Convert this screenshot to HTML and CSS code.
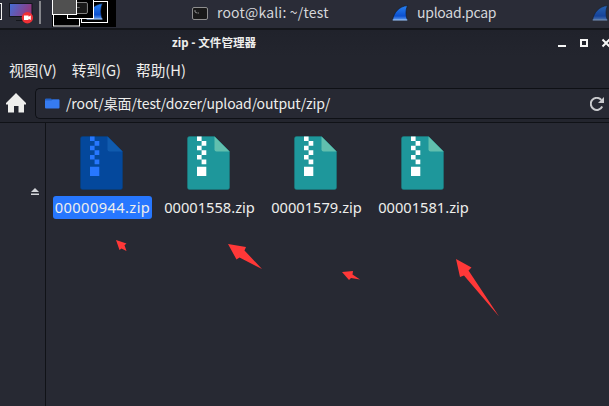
FILE: index.html
```html
<!DOCTYPE html>
<html lang="zh-CN">
<head>
<meta charset="utf-8">
<title>zip - 文件管理器</title>
<link rel="stylesheet" href="styles.css">
</head>
<body>
<svg class="defs" width="0" height="0">
  <defs>
    <linearGradient id="screen" x1="0" y1="0" x2="1" y2="0.3"><stop offset="0" stop-color="#416fd9"/><stop offset="1" stop-color="#94397f"/></linearGradient>
    <linearGradient id="fin" x1="0" y1="0" x2="0" y2="1"><stop offset="0" stop-color="#2a83f2"/><stop offset="0.7" stop-color="#0b50d0"/><stop offset="1" stop-color="#6aa5f5"/></linearGradient>
    <symbol id="shark" viewBox="0 0 16 16"><path d="M0.5 15.5C2 7 7 1.5 15.5 0.5C13.5 5 13.5 10.500 15.500 15.500Z" fill="url(#fin)" stroke="#10141c" stroke-width="0.6"/><path d="M0.700 15H15.300" stroke="#9dc0ee" stroke-width="1"/></symbol>
    <symbol id="term" viewBox="0 0 16 13"><rect x="0.500" y="0.500" width="15" height="12" rx="1.500" fill="#191919" stroke="#8f8f8f"/><path d="M3 3v2l2 1M5.500 6h1.500" fill="none" stroke="#bbb" stroke-width="0.700"/></symbol>
    <symbol id="zip" viewBox="0 0 43 54">
      <path class="sheet" d="M2.500 0.500H27.500L42.500 15.500V51.500Q42.500 53.500 40.500 53.500H2.500Q0.500 53.500 0.500 51.500V2.500Q0.500 0.500 2.500 0.500Z"/>
      <path class="fold" d="M27.500 0.500L42.500 15.500H29.500Q27.500 15.500 27.500 13.500Z"/>
      <path class="teeth" d="M10 0.500h4.600v4.500h-4.600zM14.600 5h4.700v4.700h-4.700zM10 9.700h4.600v4.600h-4.600zM14.600 14.300h4.700v4.700h-4.700zM10 19h4.600v4.600h-4.600zM14.600 23.600h4.700v4.700h-4.700zM10 30.700h9.300v9.300h-9.300z"/>
    </symbol>
  </defs>
</svg>

<header class="panel">
  <svg class="tray" width="180" height="28" viewBox="0 0 180 28">
    <rect x="-6" y="4.500" width="7.500" height="16" fill="#2a2c36" stroke="#f3f3f3"/>
    <rect x="9.500" y="4.500" width="22.500" height="13" fill="url(#screen)" stroke="#13151c"/>
    <path d="M16 21.500h8" stroke="#14161c"/>
    <circle cx="27.400" cy="18.800" r="5.700" fill="#ee3036"/>
    <path d="M24 16.500h4.500v1.200l2.300-1.200v4.500l-2.300-1.200v1.200h-4.500z" fill="#fff"/>
    <path d="M40 2v23" stroke="#85868b" stroke-width="2"/>
    <rect x="52" y="0" width="64" height="28" fill="#000"/>
    <rect x="53.500" y="15.500" width="26" height="11.500" fill="#000" stroke="#fff"/>
    <rect x="81.500" y="2.500" width="26" height="21" fill="#000" stroke="#fff"/>
    <use href="#shark" x="86" y="4" width="17" height="17"/>
    <rect x="67.500" y="-2" width="26" height="21.500" fill="#000" stroke="#fff"/>
    <use href="#term" x="73" y="3" width="15" height="12"/>
    <rect x="52.500" y="-2" width="24" height="17.500" fill="#505050" stroke="#fff"/>
  </svg>
  <div class="task task-term"><svg width="16" height="13"><use href="#term"/></svg><span>root@kali: ~/test</span></div>
  <div class="task task-cap"><svg width="16" height="16"><use href="#shark"/></svg><span>upload.pcap</span></div>
  <div class="task dim"><svg width="16" height="16"><use href="#shark"/></svg></div>
</header>

<section class="chrome">
  <div class="titlebar">
    <h1>zip - 文件管理器</h1>
    <svg width="51" height="12" viewBox="0 0 51 12">
      <path d="M0 9h8" stroke="#f5f5f5" stroke-width="2"/>
      <rect x="23" y="3" width="6" height="6" fill="none" stroke="#f5f5f5" stroke-width="2"/>
      <path d="M44.500 2.500l7 7M51.500 2.500l-7 7" stroke="#f5f5f5" stroke-width="2"/>
    </svg>
  </div>
  <nav class="menu"><span>视图(V)</span><span>转到(G)</span><span>帮助(H)</span></nav>
  <div class="location">
    <svg class="home" width="20" height="20" viewBox="0 0 20 20"><path d="M10 0L20 10V11.500H18V19.500H12.500V13H8V19.500H2V11.500H0V10L10 0Z" fill="#eeeeec"/></svg>
    <div class="path">
      <svg width="15" height="11" viewBox="0 0 15 11"><path d="M1 0.500H6L7 1.500H14V3H0V1Z" fill="#2361c5"/><path d="M0 2.500H6.500L7.500 1.500H14Q14.500 1.500 14.500 2V9.500Q14.500 10.500 13.500 10.500H1Q0 10.500 0 9.500Z" fill="#367bf0"/></svg>
      <span>/root/桌面/test/dozer/upload/output/zip/</span>
      <svg class="reload" width="14" height="14" viewBox="0 0 14 14"><path d="M12.200 9.500A6 6 0 1 1 11.300 2.900" fill="none" stroke="#c9cacd" stroke-width="2"/><path d="M14 0V6H8Z" fill="#c9cacd"/></svg>
    </div>
  </div>
</section>

<main class="content">
  <aside class="side"><svg width="8" height="7" viewBox="0 0 8 7"><path d="M4 0L8 4H0ZM0 5.500h8V7H0Z" fill="#d3d5da"/></svg></aside>
  <div class="files">
    <div class="file selected"><svg width="43" height="54"><use href="#zip"/></svg><span>00000944.zip</span></div>
    <div class="file"><svg width="43" height="54"><use href="#zip"/></svg><span>00001558.zip</span></div>
    <div class="file"><svg width="43" height="54"><use href="#zip"/></svg><span>00001579.zip</span></div>
    <div class="file"><svg width="43" height="54"><use href="#zip"/></svg><span>00001581.zip</span></div>
  </div>
  <svg class="arrows" width="609" height="283" viewBox="0 123 609 283">
    <path d="M116 240L126.500 243.500L124.500 245.300L126.500 251L121.500 248.500L119.500 250Z"/>
    <path d="M228 244L246 247L244.500 250.500L262 269L239.500 257.500L236.500 259.500Z"/>
    <path d="M342 272L353 271L352.500 274.500L360 279.500L351 278L349 280Z"/>
    <path d="M456 259L471.500 267.500L468.500 270.500L499 316.500L464 275.500L460 277Z"/>
  </svg>
</main>
</body>
</html>
```

FILE: styles.css
```css
* { box-sizing: border-box; }
body {
  margin: 0;
  width: 609px;
  height: 406px;
  overflow: hidden;
  background: #272933;
  color: #eeeeec;
  font-family: "Noto Sans", "Noto Sans CJK SC", sans-serif;
  font-size: 14.67px;
}
svg { display: block; flex: none; }
.defs { position: absolute; }

.panel {
  display: flex;
  align-items: center;
  height: 30px;
  padding-bottom: 2px;
  background: #2a2c37;
  border-bottom: 2px solid #14161b;
}
.tray { margin-right: 12px; }
.task {
  display: flex;
  align-items: center;
  gap: 9px;
  height: 26px;
  white-space: nowrap;
  font-family: "Noto Sans CJK SC", sans-serif;
  font-size: 14px;
  line-height: 26px;
  color: #d5d6da;
}
.task span { padding-bottom: 2px; line-height: 24px; }
.task-term { width: 200px; letter-spacing: 0.18px; }
.task-cap { width: 200px; letter-spacing: -0.26px; }
.dim { opacity: 0.65; }

.chrome { height: 93px; background: #23252e; border-bottom: 1px solid #101217; }
.titlebar {
  display: flex;
  align-items: center;
  justify-content: space-between;
  height: 26px;
  padding-left: 172px;
  background: linear-gradient(#20222b, #23252e);
}
.titlebar h1 { margin: 0; font-size: 11.6px; line-height: 16px; font-weight: 700; }
.menu {
  display: flex;
  gap: 15px;
  height: 32px;
  padding: 0 9px;
  font-family: "Noto Sans CJK SC", sans-serif;
  font-size: 14.67px;
  line-height: 28px;
}
.location { display: flex; align-items: flex-start; height: 34px; padding-left: 6px; }
.home { margin-top: 5px; }
.path {
  display: flex;
  align-items: center;
  flex: 1;
  height: 31px;
  margin-left: 9px;
  padding: 0 5px 0 9px;
  border: 1px solid #0e1015;
  border-right: 0;
  border-radius: 5px 0 0 5px;
  background: #272933;
  font-family: "Noto Sans CJK SC", sans-serif;
  font-size: 14px;
  letter-spacing: -0.12px;
}
.path span { margin-left: 6px; padding-bottom: 2px; }
.reload { margin-left: auto; }

.content { position: relative; display: flex; height: 283px; }
.side { width: 46px; padding: 65px 0 0 31px; border-right: 1px solid #101217; }
.files { display: flex; padding: 13px 0 0 2px; }
.file { display: flex; flex-direction: column; align-items: center; width: 107px; }
.file span {
  height: 23px;
  margin-top: 6px;
  padding: 0 2px 0 4px;
  border-radius: 3px;
  line-height: 23px;
}
.file.selected span { padding: 0 2px; background: #2777ff; letter-spacing: 0.4px; margin-left: 2px; }
.sheet { fill: var(--sheet, #1e979b); stroke: var(--edge, #197e83); stroke-width: 0.5px; }
.fold { fill: var(--fold, #61bfae); }
.teeth { fill: var(--teeth, #fff); }
.selected { --sheet: #04489c; --edge: #054083; --fold: #105bae; --teeth: #2777ff; }
.arrows { position: absolute; inset: 0; fill: #ff3838; pointer-events: none; }
```
